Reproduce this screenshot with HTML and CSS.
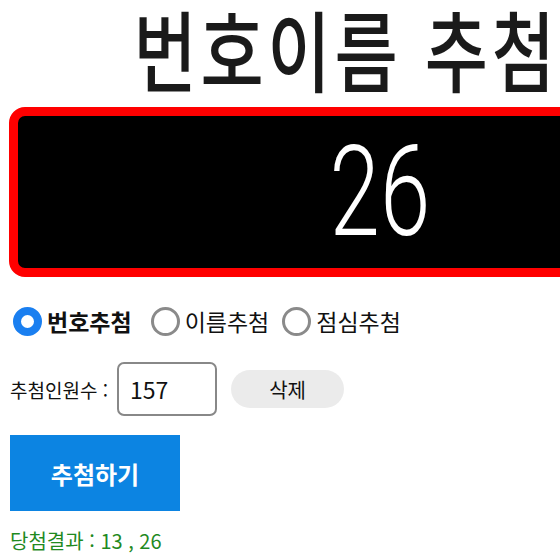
FILE: index.html
```html
<!DOCTYPE html>
<html lang="ko">

<head>
    <meta charset="UTF-8">
    <meta name="viewport" content="width=device-width, initial-scale=1.0">
    <title>번호이름 추첨기</title>
    <link rel="stylesheet" href="styles.css">
</head>

<body>
    <div class="page">
        <h1 class="title"><span>번호이름 추첨기</span></h1>

        <div class="board">
            <span class="board-num">26</span>
        </div>

        <div class="mode-row">
            <label class="mode mode-on"><input type="radio" name="mode" checked>번호추첨</label>
            <label class="mode"><input type="radio" name="mode">이름추첨</label>
            <label class="mode"><input type="radio" name="mode">점심추첨</label>
        </div>

        <div class="count-row">
            <span class="count-label">추첨인원수 :</span>
            <input class="count-input" type="text" value="157">
            <button class="del-btn">삭제</button>
        </div>

        <button class="draw-btn">추첨하기</button>

        <p class="result">당첨결과 : 13 , 26</p>
    </div>
</body>

</html>
```

FILE: styles.css
```css
* {
    margin: 0;
    padding: 0;
    box-sizing: border-box;
}

body {
    font-family: "Noto Sans CJK KR", "Noto Sans", sans-serif;
    color: #111;
    background: #fff;
    overflow: hidden;
}

.page {
    width: 760px;
    padding: 0 9px;
}

.title {
    text-align: center;
    height: 107px;
    line-height: 94px;
    font-size: 88px;
    font-weight: 500;
    color: #1a1a1a;
}

.title span {
    display: inline-block;
    letter-spacing: 5px;
    transform: scaleX(0.78);
}

.board {
    height: 170px;
    background: #000;
    border: 9px solid #ff0000;
    border-radius: 16px;
    display: flex;
    justify-content: center;
    align-items: center;
}

.board-num {
    display: inline-block;
    color: #fff;
    font-family: Roboto, sans-serif;
    font-weight: 300;
    font-size: 126px;
    line-height: 1;
    transform: scaleX(0.72);
}

.mode-row {
    display: flex;
    align-items: center;
    margin-top: 29px;
    margin-left: 4px;
    height: 30px;
}

.mode {
    display: flex;
    align-items: center;
    font-size: 23px;
    margin-right: 13px;
}

.mode-on {
    font-weight: 700;
    margin-right: 19px;
}

.mode input {
    appearance: none;
    width: 29px;
    height: 29px;
    border-radius: 50%;
    border: 3px solid #8a8a8a;
    margin-right: 5px;
}

.mode input:checked {
    border: 8px solid #1a7ff0;
}

.count-row {
    display: flex;
    align-items: center;
    margin-top: 26px;
}

.count-label {
    font-size: 19px;
    margin-left: 1px;
    margin-right: 9px;
}

.count-input {
    width: 100px;
    height: 54px;
    border: 2px solid #888;
    border-radius: 7px;
    padding-left: 11px;
    font-family: inherit;
    font-size: 23px;
    color: #111;
}

.del-btn {
    width: 113px;
    height: 38px;
    margin-left: 14px;
    border: none;
    border-radius: 19px;
    background: #ebebeb;
    font-family: inherit;
    font-size: 20px;
    color: #111;
}

.draw-btn {
    display: block;
    width: 170px;
    height: 76px;
    margin-top: 19px;
    margin-left: 1px;
    border: none;
    background: #0c84e2;
    color: #fff;
    font-family: inherit;
    font-size: 24px;
    font-weight: 700;
}

.result {
    margin-top: 15px;
    margin-left: 1px;
    font-size: 20px;
    color: #1f8a1f;
}
```
